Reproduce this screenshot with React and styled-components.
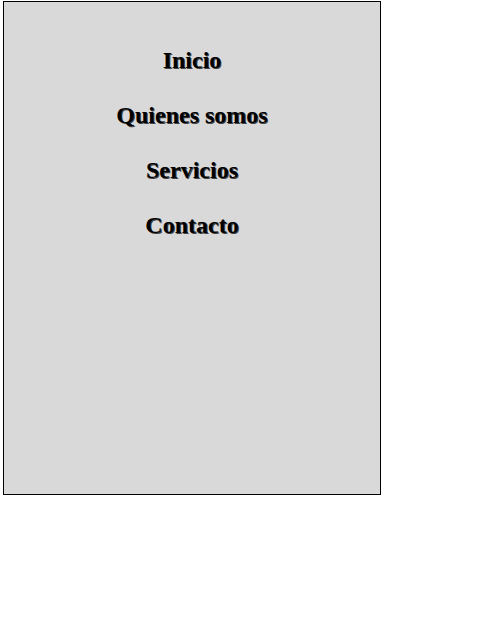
import React from "react";
import styled, { createGlobalStyle } from "styled-components";

const GlobalStyle = createGlobalStyle`
  body {
    margin: 0;
    background: #ffffff;
    font-family: "Liberation Serif", "Times New Roman", serif;
  }
`;

const Sidebar = styled.nav`
  box-sizing: border-box;
  width: 378px;
  height: 494px;
  margin: 1px 0 0 3px;
  background-color: #d9d9d9;
  border: 1px solid #000;
`;

const Menu = styled.ul`
  list-style: none;
  margin: 0;
  padding: 44px 0 0 0;
  display: flex;
  flex-direction: column;
  align-items: center;
  gap: 27px;
`;

const MenuItem = styled.li`
  font-size: 24px;
  font-weight: bold;
  line-height: 28px;
  color: #000;
  text-shadow: 1px 1px 0 #444;
`;

const items = ["Inicio", "Quienes somos", "Servicios", "Contacto"];

function App() {
  return (
    <>
      <GlobalStyle />
      <Sidebar>
        <Menu>
          {items.map(item => (
            <MenuItem key={item}>{item}</MenuItem>
          ))}
        </Menu>
      </Sidebar>
    </>
  );
}

export default App;
